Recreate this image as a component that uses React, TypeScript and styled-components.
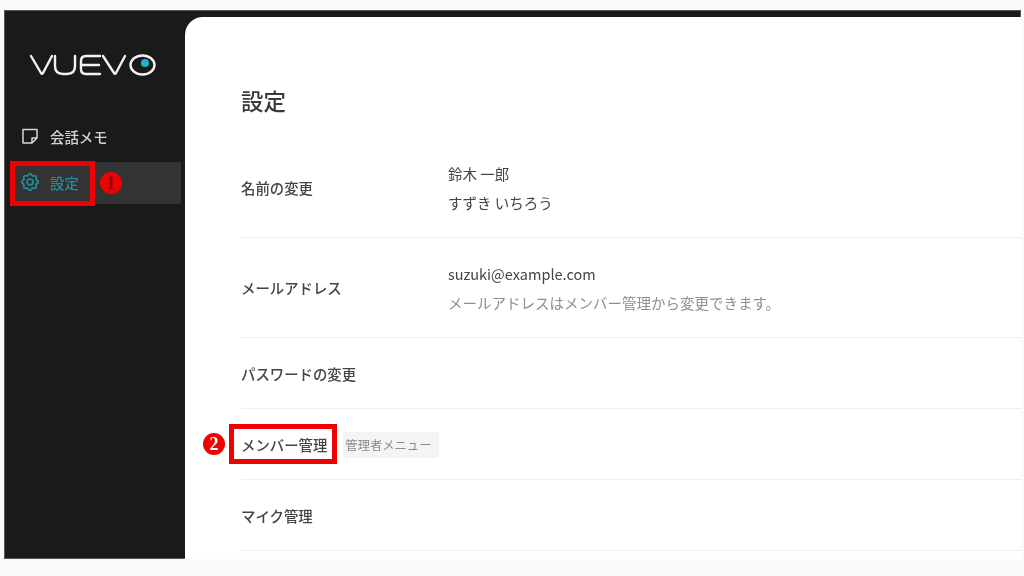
import React from "react";
import styled, { createGlobalStyle } from "styled-components";

const Global = createGlobalStyle`
  html, body { margin: 0; padding: 0; background: #fafafa; }
  body { font-family: "Noto Sans CJK JP", "Noto Sans", sans-serif; overflow: hidden; }
`;

const Frame = styled.div`
  width: 1017px;
  height: 549px;
  margin: 10px 3px 17px 4px;
  background: #1a1a1a;
  box-shadow: inset 0 0 0 1px #555555;
  display: flex;
  filter: blur(0.45px);
  overflow: hidden;
`;

const Sidebar = styled.aside`
  width: 181px;
  flex: none;
  display: flex;
  flex-direction: column;
  padding-top: 43px;
  box-sizing: border-box;
`;

const Logo = styled.svg`
  display: block;
  width: 127px;
  height: 24px;
  margin-left: 25px;
  margin-bottom: 39px;
`;

const Nav = styled.nav`
  display: flex;
  flex-direction: column;
  gap: 4px;
`;

const NavItem = styled.div<{ $active?: boolean }>`
  position: relative;
  height: 42px;
  box-sizing: border-box;
  margin: 0 4px 0 6px;
  padding: 0 0 2px 12px;
  display: flex;
  align-items: center;
  gap: 12px;
  font-size: 14.4px;
  font-weight: 500;
  color: ${(p) => (p.$active ? "#1f8ea0" : "#d2d2d2")};
  background: ${(p) => (p.$active ? "#333333" : "transparent")};
`;

const GearSvg = styled.svg`
  width: 18px;
  height: 18px;
  margin: 0 -1px;
  flex: none;
`;

const Main = styled.main`
  flex: 1;
  margin-top: 7px;
  background: #ffffff;
  border-top-left-radius: 18px;
  padding-left: 56px;
  display: flex;
  flex-direction: column;
  color: #3c3c3c;
`;

const Title = styled.h1`
  margin: 0;
  height: 121px;
  padding-top: 59px;
  box-sizing: border-box;
  font-size: 22.500px;
  line-height: 48px;
  font-weight: 500;
  color: #3a3a3a;
`;

const Row = styled.section<{ $tall?: boolean }>`
  height: ${(p) => (p.$tall ? 100 : 71)}px;
  flex: none;
  box-sizing: border-box;
  border-bottom: 1px solid #eeeeee;
  display: flex;
  align-items: center;
`;

const Label = styled.div`
  position: relative;
  width: 207px;
  flex: none;
  display: flex;
  align-items: center;
  font-size: 14.4px;
  font-weight: 500;
  color: #444;
`;

const InlineLabel = styled(Label)`
  width: auto;
`;

const Values = styled.div`
  display: flex;
  flex-direction: column;
  gap: 8px;
  font-size: 14.5px;
  line-height: 21px;
  color: #444;
`;

const Hint = styled.span`
  color: #8f8f8f;
`;

const Tag = styled.span`
  margin: 2px 0 0 16px;
  height: 26px;
  padding: 0 8px 0 2px;
  display: inline-flex;
  align-items: center;
  border-radius: 3px;
  background: #f3f4f6;
  color: #8a8a8a;
  font-size: 12.3px;
`;

const RedBox = styled.span`
  position: absolute;
  box-sizing: border-box;
  border: 5px solid #f00000;
  pointer-events: none;
`;

const NavRedBox = styled(RedBox)`
  left: 0;
  top: -1px;
  width: 85px;
  height: 45px;
`;

const LabelRedBox = styled(RedBox)`
  left: -12px;
  top: -10px;
  width: 108px;
  height: 40px;
`;

const Marker = styled.span<{ $dark?: boolean }>`
  position: absolute;
  width: 22px;
  height: 22px;
  border-radius: 50%;
  background: #f00000;
  color: ${(p) => (p.$dark ? "#8c0808" : "#ffffff")};
  font-family: "Liberation Serif", serif;
  font-weight: 700;
  font-size: 18px;
  line-height: 22px;
  text-align: center;
`;

const NavMarker = styled(Marker)`
  left: 90px;
  top: 10px;
`;

const LabelMarker = styled(Marker)`
  left: -38px;
  top: -1px;
`;

const gearPath = Array.from({ length: 72 }, (_, i) => {
  const a = (i / 72) * Math.PI * 2;
  const r = 7.5 + 0.9 * Math.cos(8 * a);
  return `${i === 0 ? "M" : "L"}${(9 + r * Math.sin(a)).toFixed(2)} ${(9 - r * Math.cos(a)).toFixed(2)}`;
}).join(" ") + " Z";

const App = () => (
  <>
    <Global />
    <Frame>
      <Sidebar>
        <Logo viewBox="0 0 127 24" fill="none" stroke="#f2f2f2" strokeWidth="2.4" strokeLinecap="round" strokeLinejoin="round">
          <path d="M2 3 L12 20 Q13 21.5 14 20 L23 3" />
          <path d="M26 3 V13 Q26 21 34 21 H38 Q46 21 46 13 V3" />
          <path d="M71 3 H57 Q52 3 52 8 V16 Q52 21 57 21 H71 M53 12 H70" />
          <path d="M74 3 L85 20 Q86 21.5 87 20 L96 3" />
          <ellipse cx="113.500" cy="12" rx="12" ry="9.500" />
          <circle cx="116" cy="10" r="4" fill="#19b5cf" stroke="none" />
        </Logo>
        <Nav>
          <NavItem>
            <svg width="16" height="16" viewBox="0 0 16 16" fill="none" stroke="#d8d8d8" strokeWidth="1.5" strokeLinejoin="round">
              <path d="M1 1.500 H15 V10 L10 15 H1 Z" />
              <path d="M15 10 H10 V15" />
            </svg>
            会話メモ
          </NavItem>
          <NavItem $active>
            <GearSvg viewBox="0 0 18 18" fill="none" stroke="#1f8ea0" strokeWidth="1.7" strokeLinejoin="round">
              <path d={gearPath} />
              <circle cx="9" cy="9" r="3" />
            </GearSvg>
            設定
            <NavRedBox />
            <NavMarker $dark>1</NavMarker>
          </NavItem>
        </Nav>
      </Sidebar>
      <Main>
        <Title>設定</Title>
        <Row $tall>
          <Label>名前の変更</Label>
          <Values>
            <span>鈴木 一郎</span>
            <span>すずき いちろう</span>
          </Values>
        </Row>
        <Row $tall>
          <Label>メールアドレス</Label>
          <Values>
            <span>suzuki@example.com</span>
            <Hint>メールアドレスはメンバー管理から変更できます。</Hint>
          </Values>
        </Row>
        <Row>
          <Label>パスワードの変更</Label>
        </Row>
        <Row>
          <InlineLabel>
            メンバー管理
            <LabelRedBox />
            <LabelMarker>2</LabelMarker>
          </InlineLabel>
          <Tag>管理者メニュー</Tag>
        </Row>
        <Row>
          <Label>マイク管理</Label>
        </Row>
      </Main>
    </Frame>
  </>
);

export default App;
